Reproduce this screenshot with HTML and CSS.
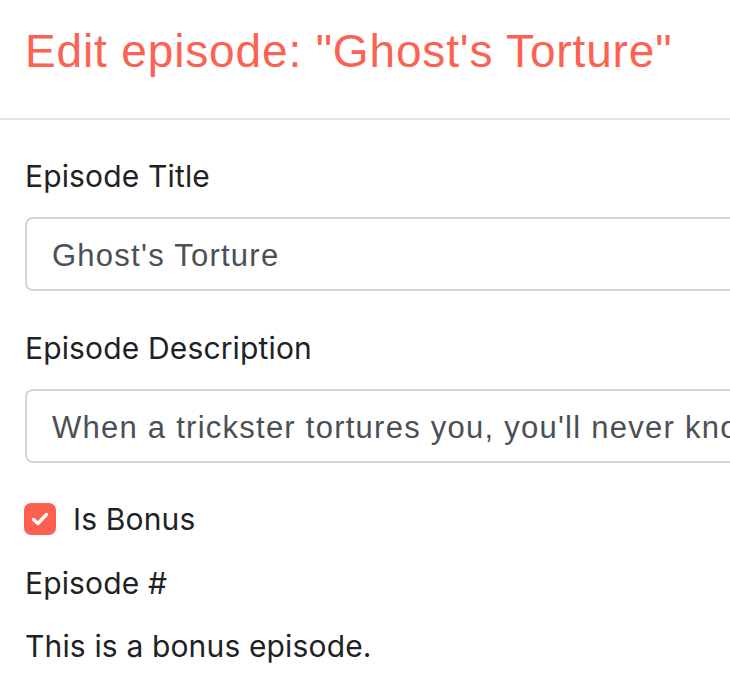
FILE: index.html
```html
<!DOCTYPE html>
<html lang="en">
<head>
<meta charset="utf-8">
<title>Edit episode</title>
<link rel="stylesheet" href="styles.css">
</head>
<body>
<div class="page">
  <header class="page-header">
    <h1 class="title">Edit episode: "Ghost's Torture"</h1>
  </header>
  <hr class="divider">
  <form class="form">
    <div class="form-group">
      <label class="label" for="title">Episode Title</label>
      <div class="input" id="title">Ghost's Torture</div>
    </div>
    <div class="form-group">
      <label class="label" for="desc">Episode Description</label>
      <div class="input" id="desc">When a trickster tortures you, you'll never know</div>
    </div>
    <div class="check-row">
      <span class="checkbox">
        <svg viewBox="0 0 32 32" width="32" height="32" aria-hidden="true"><path d="M9.5 16.5 L14 20.5 L22.5 11.5" fill="none" stroke="#fff" stroke-width="3.4" stroke-linecap="round" stroke-linejoin="round"/></svg>
      </span>
      <span class="check-label">Is Bonus</span>
    </div>
    <div class="label">Episode #</div>
    <p class="note">This is a bonus episode.</p>
  </form>
</div>
</body>
</html>
```
FILE: styles.css
```css
html, body {
  margin: 0;
  padding: 0;
  background: #fff;
  overflow: hidden;
}
.page {
  width: 730px;
  overflow: hidden;
}
.page-header {
  padding: 24px 0 0 25px;
}
.title {
  margin: 0;
  font-family: "Liberation Sans", Arial, sans-serif;
  font-weight: 400;
  font-size: 46px;
  line-height: 1.2;
  color: #fb6251;
  letter-spacing: 0.85px;
}
.divider {
  margin: 39px 0 0 0;
  border: 0;
  height: 2px;
  background: #e3e3e5;
}
.form {
  padding: 34px 0 0 25px;
  font-family: Inter, "Noto Sans", sans-serif;
  color: #212529;
}
.form-group {
  margin-bottom: 35px;
}
.label {
  display: block;
  font-size: 30px;
  letter-spacing: 0.15px;
  line-height: 45px;
  margin-bottom: 18px;
  color: #1f2225;
}
.input {
  box-sizing: border-box;
  width: 760px;
  height: 74px;
  border: 2px solid #d3d5da;
  border-right: 0;
  border-radius: 8px 0 0 8px;
  padding: 3px 0 0 25px;
  display: flex;
  align-items: center;
  font-family: "Liberation Sans", Arial, sans-serif;
  font-size: 31px;
  letter-spacing: 1.25px;
  color: #4b5056;
  white-space: nowrap;
  overflow: hidden;
}
.check-row {
  display: flex;
  align-items: center;
  gap: 17px;
  margin: 40px 0 26px -1px;
  height: 32px;
}
.checkbox {
  width: 32px;
  height: 32px;
  border-radius: 7px;
  background: #fd5f50;
  display: block;
  flex: none;
}
.checkbox svg {
  display: block;
}
.check-label {
  font-size: 30px;
  letter-spacing: 0.15px;
  line-height: 45px;
  color: #1f2225;
}
.note {
  margin: 0;
  font-size: 30px;
  letter-spacing: 0.15px;
  line-height: 45px;
  color: #1f2225;
}
```
